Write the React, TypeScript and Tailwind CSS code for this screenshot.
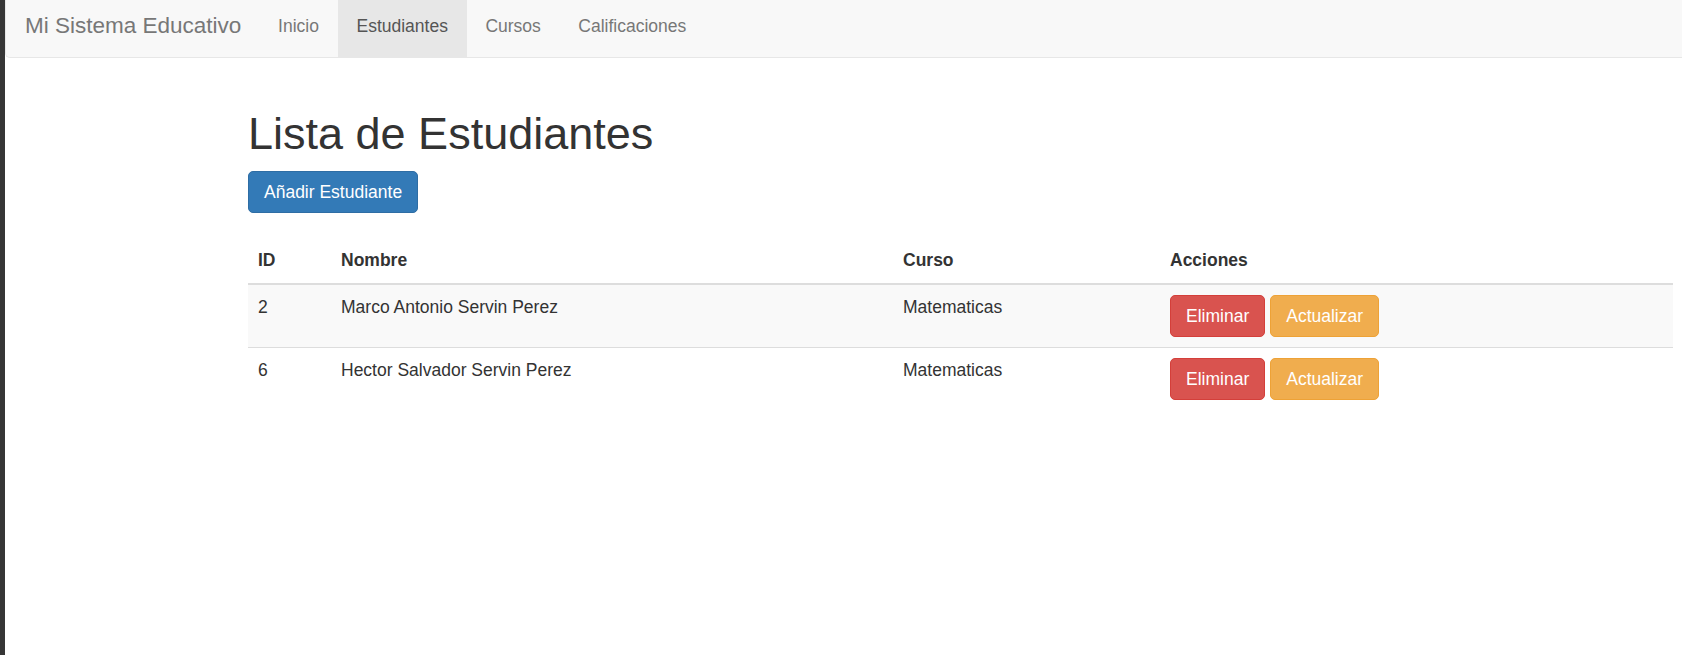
import React from "react";

const rows = [
  { id: "2", nombre: "Marco Antonio Servin Perez", curso: "Matematicas" },
  { id: "6", nombre: "Hector Salvador Servin Perez", curso: "Matematicas" },
];

export default function App() {
  return (
    <div className="flex min-h-[655px] w-full bg-white font-['Liberation_Sans',Arial,sans-serif] text-[#333]">
      <div className="w-[5px] shrink-0 bg-[#363636]" />
      <div className="min-w-0 flex-1">
        <nav className="flex h-[58px] items-stretch rounded-bl-[5px] border-b border-l border-[#e7e7e7] bg-[#f8f8f8]">
          <a className="block pl-[19px] pr-[18px] pt-[12.5px] text-[22.5px] leading-[25px] text-[#777]">
            Mi Sistema Educativo
          </a>
          <ul className="flex items-stretch">
            <li>
              <a className="block h-full px-[18.75px] pt-[13.5px] text-[17.5px] leading-[25px] text-[#777]">Inicio</a>
            </li>
            <li>
              <a className="block h-full bg-[#e7e7e7] px-[18.75px] pt-[13.5px] text-[17.5px] leading-[25px] text-[#555]">
                Estudiantes
              </a>
            </li>
            <li>
              <a className="block h-full px-[18.75px] pt-[13.5px] text-[17.5px] leading-[25px] text-[#777]">Cursos</a>
            </li>
            <li>
              <a className="block h-full px-[18.75px] pt-[13.5px] text-[17.5px] leading-[25px] text-[#777]">
                Calificaciones
              </a>
            </li>
          </ul>
        </nav>
        <main className="pl-[243px] pr-[9px]">
          <h1 className="mt-[51px] text-[45px] font-normal leading-[49.5px] text-[#333]">Lista de Estudiantes</h1>
          <button className="mt-[12.5px] rounded-[5px] border border-[#2e6da4] bg-[#337ab7] px-[15px] py-[7.5px] text-[17.5px] leading-[25px] text-white">
            Añadir Estudiante
          </button>
          <table className="mt-[25px] w-full table-fixed border-collapse text-left text-[17.5px] leading-[25px]">
            <colgroup>
              <col className="w-[83px]" />
              <col className="w-[562px]" />
              <col className="w-[267px]" />
              <col />
            </colgroup>
            <thead>
              <tr className="border-b-2 border-[#ddd]">
                <th className="p-[10px] font-bold">ID</th>
                <th className="p-[10px] font-bold">Nombre</th>
                <th className="p-[10px] font-bold">Curso</th>
                <th className="p-[10px] font-bold">Acciones</th>
              </tr>
            </thead>
            <tbody>
              {rows.map((r, i) => (
                <tr key={r.id} className={(i === 0 ? "bg-[#f9f9f9] " : "") + (i > 0 ? "border-t border-[#ddd]" : "")}>
                  <td className="p-[10px] align-top">{r.id}</td>
                  <td className="p-[10px] align-top">{r.nombre}</td>
                  <td className="p-[10px] align-top">{r.curso}</td>
                  <td className="p-[10px] align-top">
                    <div className="flex gap-[5px]">
                      <button className="rounded-[5px] border border-[#d43f3a] bg-[#d9534f] px-[15px] py-[7.5px] text-[17.5px] leading-[25px] text-white">
                        Eliminar
                      </button>
                      <button className="rounded-[5px] border border-[#eea236] bg-[#f0ad4e] px-[15px] py-[7.5px] text-[17.5px] leading-[25px] text-white">
                        Actualizar
                      </button>
                    </div>
                  </td>
                </tr>
              ))}
            </tbody>
          </table>
        </main>
      </div>
    </div>
  );
}
